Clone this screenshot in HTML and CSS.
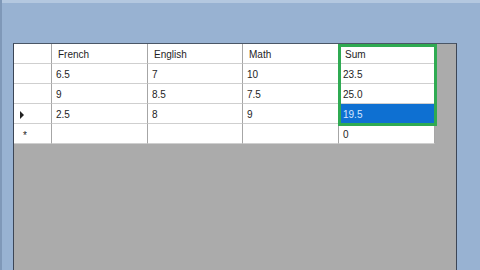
FILE: index.html
```html
<!DOCTYPE html>
<html>
<head>
<meta charset="utf-8">
<link rel="stylesheet" href="styles.css">
</head>
<body>
<div class="window">
  <div class="topstrip"></div>
  <div class="area">
    <div class="grid">
      <div class="table">
        <div class="cell rh"></div>
        <div class="cell hd">French</div>
        <div class="cell hd">English</div>
        <div class="cell hd">Math</div>
        <div class="cell hd">Sum</div>

        <div class="cell rh"></div>
        <div class="cell">6.5</div>
        <div class="cell">7</div>
        <div class="cell">10</div>
        <div class="cell">23.5</div>

        <div class="cell rh"></div>
        <div class="cell">9</div>
        <div class="cell">8.5</div>
        <div class="cell">7.5</div>
        <div class="cell">25.0</div>

        <div class="cell rh"><span class="arrow"></span></div>
        <div class="cell">2.5</div>
        <div class="cell">8</div>
        <div class="cell">9</div>
        <div class="cell sel">19.5</div>

        <div class="cell rh"><span class="star">*</span></div>
        <div class="cell"></div>
        <div class="cell"></div>
        <div class="cell"></div>
        <div class="cell">0</div>
      </div>
      <div class="highlight"></div>
    </div>
  </div>
</div>
</body>
</html>
```
FILE: styles.css
```css
html, body {
  margin: 0;
  padding: 0;
  width: 480px;
  height: 270px;
  overflow: hidden;
}
body {
  background: #98b2d2;
  font-family: "Liberation Sans", Arial, sans-serif;
  font-size: 10px;
  color: #1e1e1e;
}
.window {
  display: flex;
  flex-direction: column;
  height: 270px;
  border-left: 2px solid #7f98b8;
  box-sizing: border-box;
}
.topstrip {
  height: 3px;
  background: #b4c8e0;
}
.area {
  flex: 1;
  padding: 40px 0 0 11px;
  display: flex;
}
.grid {
  position: relative;
  width: 442px;
  background: #ababab;
  border-left: 1px solid #3c4656;
  border-top: 1px solid #4a5666;
  border-right: 1px solid #3c4656;
}
.table {
  display: grid;
  grid-template-columns: 38px 96px 95px 96px 96px;
  grid-auto-rows: 20px;
  background: #ffffff;
  width: max-content;
}
.cell {
  box-sizing: border-box;
  border-right: 1px solid #a6a6a6;
  border-bottom: 1px solid #cfcfcf;
  padding: 2px 0 0 4px;
  display: flex;
  align-items: center;
  background: #ffffff;
  white-space: nowrap;
}
.hd {
  padding-left: 6px;
}
.rh {
  justify-content: flex-start;
  padding-left: 6px;
}
.arrow {
  width: 0;
  height: 0;
  border-top: 4px solid transparent;
  border-bottom: 4px solid transparent;
  border-left: 4px solid #222;
}
.star {
  font-size: 10px;
  line-height: 10px;
  padding-left: 3px;
  padding-top: 3px;
  color: #222;
}
.sel {
  background: #0e70d2;
  color: #d6e6ff;
}
.highlight {
  position: absolute;
  left: 324px;
  top: 0px;
  width: 99px;
  height: 82px;
  box-sizing: border-box;
  border: 3px solid #2faa52;
  pointer-events: none;
}
```
